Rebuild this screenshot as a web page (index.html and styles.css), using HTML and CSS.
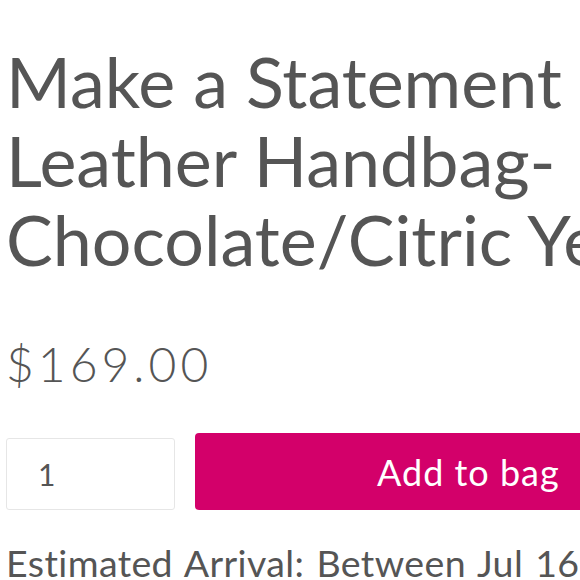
FILE: index.html
```html
<!DOCTYPE html>
<html>
<head>
<meta charset="utf-8">
<link rel="stylesheet" href="styles.css">
</head>
<body>
<div class="product">
  <h1 class="title"><span class="line">Make a Statement</span> <span class="line">Leather Handbag-</span> <span class="line">Chocolate/Citric Yellow</span></h1>
  <div class="price">$169.00</div>
  <div class="buy-row">
    <input class="qty" type="text" value="1">
    <button class="add">Add to bag</button>
  </div>
  <p class="arrival">Estimated Arrival: Between Jul 16 and Jul 20</p>
</div>
</body>
</html>
```
FILE: styles.css
```css
html, body {
  margin: 0;
  padding: 0;
  background: #fff;
  overflow: hidden;
}
.product {
  width: 900px;
  padding: 42px 0 0 6px;
  color: #555;
  font-family: Lato, "Liberation Sans", sans-serif;
}
.title {
  margin: 0;
  font-weight: 400;
  font-size: 70px;
  line-height: 79px;
}
.title .line {
  display: block;
  white-space: nowrap;
}
.price {
  margin-top: 55px;
  font-size: 48px;
  line-height: 60px;
  letter-spacing: 4px;
  font-weight: 300;
}
.buy-row {
  margin-top: 39px;
  display: flex;
  align-items: flex-end;
  gap: 20px;
}
.qty {
  box-sizing: border-box;
  width: 169px;
  height: 72px;
  border: 1px solid #e6e6e6;
  border-radius: 3px;
  padding: 0 0 0 31px;
  font-family: Lato, sans-serif;
  font-size: 30px;
  color: #555;
  outline: none;
}
.add {
  box-sizing: border-box;
  width: 420px;
  height: 77px;
  border: 0;
  border-radius: 4px;
  background: #d3006a;
  color: #fff;
  font-family: Lato, sans-serif;
  font-size: 36px;
  letter-spacing: 1px;
  text-align: left;
  padding-left: 182px;
}
.arrival {
  margin: 30px 0 0;
  font-size: 37.5px;
  line-height: 45px;
  letter-spacing: 0.4px;
  word-spacing: 2px;
  white-space: nowrap;
}
```
